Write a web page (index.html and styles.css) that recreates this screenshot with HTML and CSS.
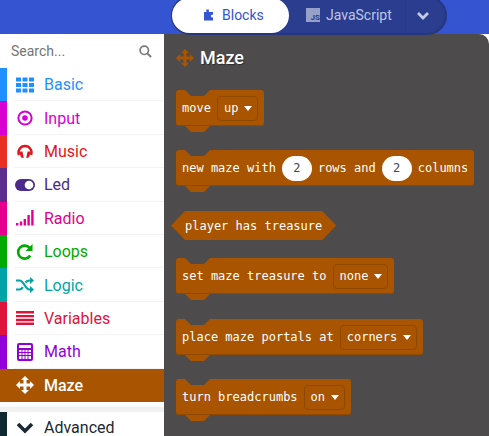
FILE: index.html
```html
<!doctype html>
<html lang="en">
  <head>
    <meta charset="UTF-8" />
    <title>Maze blocks</title>
    <link rel="stylesheet" href="styles.css">
  </head>
  <body>
    <svg width="0" height="0" class="defs">
      <symbol id="move" viewBox="0 0 18 18">
        <path d="M9 0L13 4H10.500V7.500H14V5L18 9L14 13V10.500H10.500V14H13L9 18L5 14H7.500V10.500H4V13L0 9L4 5V7.500H7.500V4H5z" />
      </symbol>
    </svg>

    <header class="topbar">
      <div class="toggle">
        <div class="tab tab-active">
          <svg class="tab-icon" viewBox="0 0 10 12"><path d="M3 0h2.400v2.800H10v3a1.600 1.600 0 1 0 0 2.800V12H0V2.800h3.400A1.700 1.700 0 0 1 3 0z" /></svg>
          Blocks
        </div>
        <div class="tab tab-js">
          <span class="js-icon">JS</span>
          JavaScript
        </div>
        <div class="tab-more">
          <svg viewBox="0 0 14 10" width="14" height="10"><path d="M2 2l5 5 5-5" fill="none" stroke="#c3cbe6" stroke-width="2.800" /></svg>
        </div>
      </div>
    </header>

    <main class="main">
      <aside class="sidebar">
        <div class="search">
          <span>Search...</span>
          <svg viewBox="0 0 14 14" width="13" height="13"><circle cx="5.700" cy="5.700" r="4.500" fill="none" stroke="#7a7a7a" stroke-width="1.800" /><path d="M9 9l4 4" stroke="#7a7a7a" stroke-width="2.200" /></svg>
        </div>

        <div class="cat cat-basic">
          <svg class="cat-icon" viewBox="0 0 18 15">
            <path d="M0 0h5v4H0zM6.500 0h5v4h-5zM13 0h5v4h-5zM0 5.500h5v4H0zM6.500 5.500h5v4h-5zM13 5.500h5v4h-5zM0 11h5v4H0zM6.500 11h5v4h-5zM13 11h5v4h-5z" />
          </svg>
          Basic
        </div>
        <div class="cat cat-input">
          <svg class="cat-icon" viewBox="0 0 18 18">
            <circle cx="9" cy="9" r="6.600" fill="none" stroke="currentColor" stroke-width="2" />
            <circle cx="9" cy="9" r="2.800" />
          </svg>
          Input
        </div>
        <div class="cat cat-music">
          <svg class="cat-icon" viewBox="0 0 18 18">
            <path d="M3 13a6.500 6.500 0 1 1 12 0" fill="none" stroke="currentColor" stroke-width="2.400" />
            <path d="M3 9.500h3.400l1.400 6.500-2.800-.500zM15 9.500h-3.400l-1.400 6.500 2.800-.500z" />
          </svg>
          Music
        </div>
        <div class="cat cat-led">
          <svg class="cat-icon cat-icon-wide" viewBox="0 0 20 12">
            <rect width="20" height="12" rx="6" />
            <circle cx="14" cy="6" r="4.300" fill="#fff" />
          </svg>
          Led
        </div>
        <div class="cat cat-radio">
          <svg class="cat-icon" viewBox="0 0 18 16">
            <path d="M0 13h2.400v2.600H0zM3.800 11.500h2.400v4.100H3.800zM7.600 9h2.400v6.600H7.600zM11.400 5h2.400v10.600h-2.400zM15.200 0h2.400v15.600h-2.400z" />
          </svg>
          Radio
        </div>
        <div class="cat cat-loops">
          <svg class="cat-icon" viewBox="0 0 18 18">
            <path d="M14.200 12.500a6.500 6.500 0 1 1-.6-7.600" fill="none" stroke="currentColor" stroke-width="2.600" />
            <path d="M16.500 1v7h-7z" />
          </svg>
          Loops
        </div>
        <div class="cat cat-logic">
          <svg class="cat-icon" viewBox="0 0 18 16">
            <path d="M0 3.500h3.500c4.500 0 5.500 9 10 9H15M0 12.500h3.500c1.500 0 2.500-1 3.300-2.400M9.500 5.500c1-1.200 2.200-2 4-2H15" fill="none" stroke="currentColor" stroke-width="2.200" />
            <path d="M14 0l4 3.500-4 3.500zM14 9l4 3.500-4 3.500z" />
          </svg>
          Logic
        </div>
        <div class="cat cat-variables">
          <svg class="cat-icon" viewBox="0 0 18 14">
            <path d="M0 0h18v2.400H0zM0 3.900h18v2.400H0zM0 7.800h18v2.400H0zM0 11.600h18V14H0z" />
          </svg>
          Variables
        </div>
        <div class="cat cat-math">
          <svg class="cat-icon" viewBox="0 0 16 18">
            <path fill-rule="evenodd" d="M2 0h12a2 2 0 0 1 2 2v14a2 2 0 0 1-2 2H2a2 2 0 0 1-2-2V2a2 2 0 0 1 2-2zM2 2v3h12V2zM2 7v2h2.500V7zM5.500 7v2h2V7zM8.500 7v2h2V7zM11.500 7v2H14V7zM2 10v2h2.500v-2zM5.500 10v2h2v-2zM8.500 10v2h2v-2zM11.500 10v2H14v-2zM2 13v3h2.500v-3zM5.500 13v3h2v-3zM8.500 13v3h2v-3zM11.500 13v3H14v-3z" />
          </svg>
          Math
        </div>
        <div class="cat cat-maze">
          <svg class="cat-icon"><use href="#move" /></svg>
          Maze
        </div>

        <div class="cat cat-advanced">
          <svg class="cat-icon" viewBox="0 0 18 12">
            <path d="M2 2l7 7 7-7" fill="none" stroke="currentColor" stroke-width="3.600" />
          </svg>
          Advanced
        </div>
      </aside>

      <section class="flyout">
        <h2 class="flyout-title">
          <svg class="title-icon"><use href="#move" /></svg>
          Maze
        </h2>

        <div class="block">move <span class="drop">up</span></div>
        <div class="block">new maze with <span class="num">2</span> rows and <span class="num">2</span> columns</div>
        <div class="block-bool">player has treasure</div>
        <div class="block">set maze treasure to <span class="drop">none</span></div>
        <div class="block block-shifted">place maze portals at <span class="drop">corners</span></div>
        <div class="block">turn breadcrumbs <span class="drop">on</span></div>
      </section>
    </main>
  </body>
</html>
```

FILE: styles.css
```css
html,
body {
  margin: 0;
  height: 100%;
  overflow: hidden;
}
body {
  font-family: Roboto, sans-serif;
  background: #fff;
}
.defs {
  position: absolute;
}

/* top bar */
.topbar {
  height: 34px;
  background: #3454d1;
  position: relative;
}
.toggle {
  position: absolute;
  z-index: 2;
  left: 171px;
  top: -4px;
  width: 276px;
  height: 39px;
  display: flex;
  background: #2a3d8f;
  border-radius: 20px;
  box-sizing: border-box;
  border: 2px solid #26377f;
  font-size: 14px;
}
.tab {
  display: flex;
  align-items: center;
  padding-bottom: 1px;
  box-sizing: border-box;
}
.tab-active {
  width: 117px;
  height: 35px;
  margin-left: -1px;
  padding-left: 32px;
  gap: 9px;
  background: #fff;
  color: #3454d1;
  border-radius: 18px;
}
.tab-icon {
  width: 9px;
  height: 12px;
  fill: #3454d1;
}
.tab-js {
  width: 116px;
  padding-left: 17px;
  gap: 6px;
  color: #bfc6e2;
}
.js-icon {
  width: 14px;
  height: 14px;
  background: #97a0c9;
  color: #2a3d8f;
  font-size: 8px;
  font-weight: 700;
  line-height: 19px;
  text-align: right;
  overflow: hidden;
}
.tab-more {
  flex: 1;
  display: flex;
  align-items: center;
  justify-content: center;
  padding-top: 1px;
  padding-right: 6px;
  border-left: 1px solid #27388a;
}

.main {
  display: flex;
  height: 402px;
}

/* categories */
.sidebar {
  width: 164px;
  flex: none;
  background: #fff;
}
.search {
  height: 34px;
  display: flex;
  align-items: center;
  justify-content: space-between;
  padding: 0 12px 0 11px;
  font-size: 14px;
  color: #757575;
}
.cat {
  height: 33.4px;
  box-sizing: border-box;
  display: flex;
  align-items: center;
  font-size: 16px;
  color: var(--cat);
  background: linear-gradient(#f3f3f3, #f3f3f3) no-repeat 7px 100% / 157px 1px;
  border-left: 7px solid var(--cat);
}
.cat-icon {
  width: 18px;
  height: 18px;
  margin: 0 10px 0 9px;
  flex: none;
  fill: currentColor;
}
.cat-icon-wide {
  width: 20px;
  margin: 0 9px 0 8px;
}
.cat-basic { --cat: #1e90ff; }
.cat-input { --cat: #d400d4; }
.cat-music { --cat: #e63022; color: #e2141c; }
.cat-led { --cat: #5c2d91; color: #4b2a8c; }
.cat-radio { --cat: #e3008c; }
.cat-loops { --cat: #00aa00; }
.cat-logic { --cat: #00a4a6; }
.cat-variables { --cat: #dc143c; }
.cat-math { --cat: #9400d3; }
.cat-maze {
  --cat: #a85400;
  background: #a85400;
  color: #fff;
  font-weight: 500;
}
.cat-advanced {
  --cat: #0e2a30;
  height: 32px;
  margin-top: 10px;
  line-height: 16px;
  color: #1a2a33;
  box-shadow: 0 -5px 0 #f1f1f1;
}

/* flyout */
.flyout {
  flex: 1;
  background: #4d4b4c;
  border-radius: 0 10px 0 0;
  padding: 14px 0 0 12px;
  display: flex;
  flex-direction: column;
  align-items: flex-start;
  gap: 24px;
  font-family: "DejaVu Sans Mono", monospace;
  font-size: 12px;
  color: #fff;
}
.flyout-title {
  flex: none;
  margin: 0 0 -1px;
  height: 19px;
  display: flex;
  align-items: center;
  gap: 6px;
  font-family: Roboto, sans-serif;
  font-size: 18px;
  font-weight: 500;
  text-shadow: 1px 1px 1px rgba(0, 0, 0, 0.4);
}
.title-icon {
  width: 18px;
  height: 18px;
  fill: #a85400;
}

/* blocks */
.block {
  flex: none;
  position: relative;
  height: 36px;
  box-sizing: border-box;
  display: flex;
  align-items: center;
  gap: 6px;
  padding: 0 5.500px 0 6px;
  background: #a85400;
  border-radius: 3px;
  white-space: nowrap;
  box-shadow: inset 0 -1px 0 #8f4800;
}
.block-shifted {
  margin-top: 1px;
}
.block::before,
.block::after {
  content: "";
  position: absolute;
  left: 9px;
  width: 25px;
  height: 6px;
  clip-path: polygon(0 0, 100% 0, 76% 100%, 24% 100%);
}
.block::before {
  top: 0;
  background: #4d4b4c;
}
.block::after {
  top: 100%;
  background: #a85400;
}
.block-bool {
  flex: none;
  height: 29px;
  margin: 1px 0 -6px -5px;
  padding: 0 14px;
  display: flex;
  align-items: center;
  background: #a85400;
  clip-path: polygon(0 50%, 14px 0, calc(100% - 14px) 0, 100% 50%, calc(100% - 14px) 100%, 14px 100%);
  white-space: nowrap;
}
.drop {
  height: 25px;
  box-sizing: border-box;
  display: flex;
  align-items: center;
  gap: 6px;
  padding: 0 5px 0 6px;
  border: 1px solid #8f4800;
  border-radius: 4px;
}
.drop::after {
  content: "";
  width: 0;
  height: 0;
  border-left: 4px solid transparent;
  border-right: 4px solid transparent;
  border-top: 5px solid #fff;
}
.num {
  width: 30px;
  height: 25px;
  display: flex;
  align-items: center;
  justify-content: center;
  background: #fff;
  border-radius: 12.5px;
  color: #3a4560;
}
```
